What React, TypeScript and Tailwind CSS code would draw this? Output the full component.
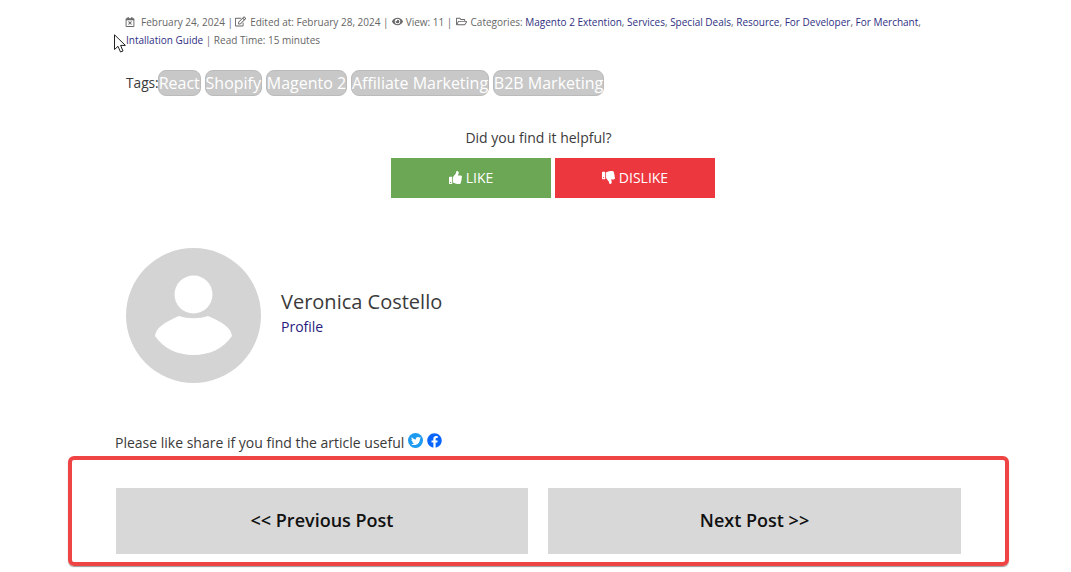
import { FaEye, FaFacebook, FaRegCalendarTimes, FaRegEdit, FaRegFolderOpen, FaThumbsDown, FaThumbsUp, FaTwitter } from "react-icons/fa";

const categories = [
  "Magento 2 Extention",
  "Services",
  "Special Deals",
  "Resource",
  "For Developer",
  "For Merchant",
];

const tags = ["React", "Shopify", "Magento 2", "Affiliate Marketing", "B2B Marketing"];

function Cursor() {
  return (
    <svg className="absolute left-[114px] top-[34px]" width="13" height="19" viewBox="0 0 13 19">
      <path d="M0.5 0.8V15.5L4 12.3L6.5 18L9 17L6.6 11.4H11.4Z" fill="#fff" stroke="#222" strokeWidth="1" />
    </svg>
  );
}

function Avatar() {
  return (
    <svg width="135" height="135" viewBox="0 0 135 135">
      <circle cx="67.5" cy="67.5" r="67.5" fill="#d4d4d4" />
      <circle cx="67.5" cy="46.5" r="19" fill="#fff" />
      <path d="M29 88C30 80 37 75 53 68C62 71 73 71 82 68C98 75 105 80 106 88C97 101 83 107 67.5 107C52 107 38 101 29 88Z" fill="#fff" />
    </svg>
  );
}

export default function App() {
  return (
    <div className="relative h-[572px] w-[1071px] overflow-hidden bg-white font-['Open_Sans',sans-serif] text-[#3a3a3a]">
      <Cursor />

      <div className="ml-[125px] w-[800px] pt-[13px] text-[10px] leading-[18px] text-[#666]">
        <FaRegCalendarTimes className="mr-[6px] inline size-[10px] align-[-1px]" />
        February 24, 2024 | <FaRegEdit className="-ml-[1px] mr-[2px] inline size-[11px] align-[-1px]" /> Edited at: February 28, 2024 |{" "}
        <FaEye className="ml-[1px] inline size-[11px] align-[-1px]" /> View: 11 | <FaRegFolderOpen className="mx-[1px] inline size-[11px] align-[-1px]" /> Categories:{" "}
        {categories.map((name) => (
          <span key={name}>
            <a className="text-[#2f2f7f]">{name}</a>,{" "}
          </span>
        ))}
        <br />
        <a className="ml-[1px] text-[#2f2f7f]">Intallation Guide</a> | Read Time: 15 minutes
      </div>

      <div className="ml-[126px] mt-[20px] flex h-[27px] items-center">
        <span className="pt-[1px] text-[13.7px]">Tags:</span>
        <div className="-ml-[1px] flex gap-[3.75px]">
          {tags.map((tag) => (
            <span key={tag} className="rounded-[8px] border border-[#bbb] bg-[#c8c8c8] text-[16px] leading-[24px] text-white">
              {tag}
            </span>
          ))}
        </div>
      </div>

      <p className="ml-[116px] mt-[32px] w-[845px] text-center text-[14px] leading-[20px]">Did you find it helpful?</p>

      <div className="ml-[391px] mt-[10px] flex gap-[4px]">
        <button className="flex h-[40px] w-[160px] items-center justify-center gap-[4px] bg-[#6ca755] pb-[1px] text-[14px] text-white">
          <FaThumbsUp className="size-[13px]" /> LIKE
        </button>
        <button className="flex h-[40px] w-[160px] items-center justify-center gap-[4px] bg-[#ed373f] pb-[1px] text-[14px] text-white">
          <FaThumbsDown className="size-[13px]" /> DISLIKE
        </button>
      </div>

      <div className="ml-[126px] mt-[50px] flex items-center gap-[20px]">
        <Avatar />
        <div className="mb-[4px]">
          <div className="text-[20px] leading-[26px] text-[#3a3a3a]">Veronica Costello</div>
          <a className="block text-[14px] leading-[24px] text-[#2a1a80]">Profile</a>
        </div>
      </div>

      <div className="ml-[115px] mt-[48px] flex h-[22px] items-center text-[14px]">
        Please like share if you find the article useful
        <span className="ml-[4px] mb-[3px] flex size-[15px] items-center justify-center rounded-full bg-[#1d9bf0]">
          <FaTwitter className="size-[10px] text-white" />
        </span>
        <FaFacebook className="ml-[4px] mb-[3px] size-[15px] text-[#0866ff]" />
      </div>

      <div className="ml-[68px] mt-[3px] flex h-[110px] w-[941px] items-start gap-[20px] rounded-[6px] border-4 border-[#ef4444] pl-[44px] pt-[28px] shadow-[0_1px_1px_#9a9a9a]">
        <a className="flex h-[66px] w-[412px] items-center justify-center bg-[#d8d8d8] pb-[2px] text-[18px] font-semibold text-[#111]">
          {"<< Previous Post"}
        </a>
        <a className="flex h-[66px] w-[413px] items-center justify-center bg-[#d8d8d8] pb-[2px] text-[18px] font-semibold text-[#111]">
          {"Next Post >>"}
        </a>
      </div>
    </div>
  );
}
